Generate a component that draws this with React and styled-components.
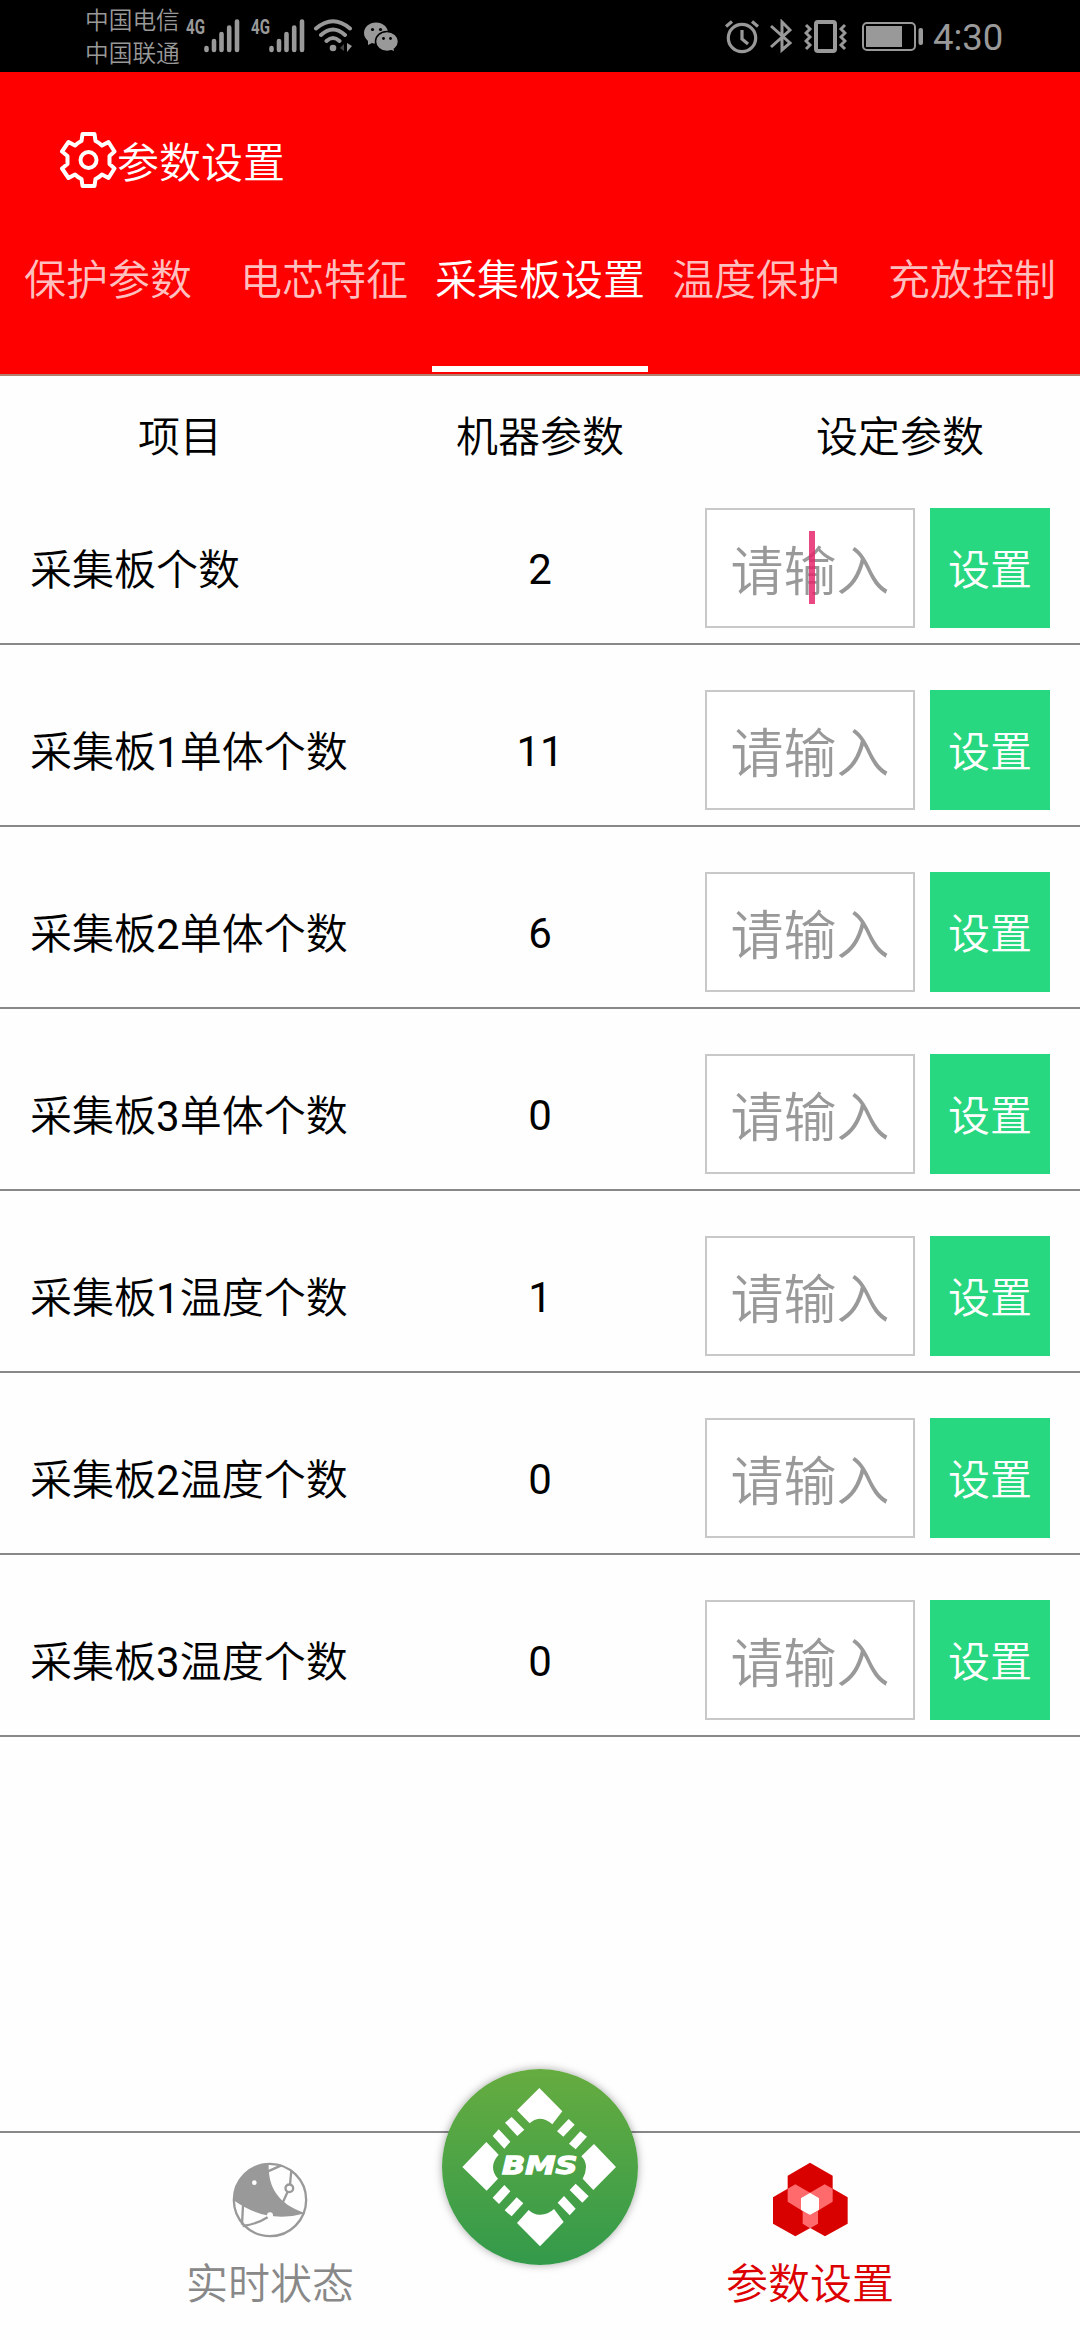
import React from "react";
import styled, { createGlobalStyle } from "styled-components";

const GlobalStyle = createGlobalStyle`
  * {
    box-sizing: border-box;
  }
  body {
    margin: 0;
    background: #fefefe;
    color: #000;
    font-family: Roboto, "Noto Sans CJK SC", sans-serif;
    font-size: 42px;
    font-weight: 350;
    line-height: 50px;
  }
  svg {
    display: block;
    flex: none;
  }
`;

const StyledPage = styled.div`
  display: flex;
  flex-direction: column;
  width: 1080px;
  height: 2340px;
`;

const StyledStatusBar = styled.div`
  display: flex;
  justify-content: space-between;
  height: 72px;
  padding: 0 78px 0 85px;
  background: #000;
  color: #999;
`;

const StyledStatusGroup = styled.div`
  display: flex;
  align-items: flex-start;
  padding-top: ${(props) => props.$top || 0}px;
`;

const StyledCarriers = styled.div`
  width: 101px;
  padding-top: 5px;
  font-size: 23.7px;
  line-height: 33px;
  white-space: nowrap;
`;

const StyledSignal = styled.div`
  display: flex;
  align-items: flex-start;
  width: 65px;
  padding-top: 19px;
`;

const StyledNetwork = styled.span`
  width: 18px;
  font-size: 21px;
  font-weight: 700;
  line-height: 16px;
  transform: scaleX(0.72);
  transform-origin: left;
`;

const StyledStatusIcon = styled.svg`
  margin-top: ${(props) => props.$top || 0}px;
  margin-left: ${(props) => props.$left || 0}px;
`;

const StyledClock = styled.span`
  width: 69px;
  margin-left: 9px;
  font-size: 36.5px;
  font-weight: 400;
  line-height: 38px;
  white-space: nowrap;
`;

const StyledHeader = styled.header`
  display: flex;
  flex-direction: column;
  height: 304px;
  background: #ff0000;
  border-bottom: 2px solid #b08070;
  color: #fff;
`;

const StyledTitle = styled.div`
  display: flex;
  align-items: center;
  height: 56px;
  margin: 60px 0 0 60px;
`;

const StyledTitleText = styled.h1`
  margin: 7px 0 0;
  font-size: 42px;
  font-weight: 350;
`;

const StyledTabs = styled.nav`
  display: flex;
  flex: 1;
`;

const StyledTab = styled.div`
  width: 216px;
  margin-bottom: 2px;
  padding-top: 68px;
  border-bottom: 6px solid ${(props) => (props.$active ? "#fff" : "transparent")};
  color: ${(props) => (props.$active ? "#fff" : "#ffbfbf")};
  text-align: center;
  white-space: nowrap;
`;

const StyledTableHead = styled.div`
  display: grid;
  grid-template-columns: repeat(3, 360px);
  height: 87px;
  padding-top: 37px;
  text-align: center;
`;

const StyledRow = styled.div`
  display: grid;
  grid-template-columns: 360px 345px 375px;
  height: 182px;
  padding: 45px 0 15px;
  border-bottom: 2px solid #888;
`;

const StyledLabel = styled.div`
  padding: 38px 0 0 30px;
  white-space: nowrap;
`;

const StyledDigit = styled.span`
  font-weight: 400;
`;

const StyledValue = styled.div`
  width: 360px;
  padding-top: 37px;
  font-weight: 400;
  text-align: center;
`;

const StyledActions = styled.div`
  display: flex;
  gap: 15px;
`;

const StyledInput = styled.div`
  position: relative;
  width: 210px;
  height: 120px;
  padding-top: 31px;
  border: 2px solid #c8c8c8;
  background: #fff;
  color: #999;
  font-size: 53px;
  line-height: 64px;
  text-align: center;
`;

const StyledCaret = styled.div`
  position: absolute;
  top: 21px;
  left: 102px;
  width: 6px;
  height: 73px;
  background: rgba(228, 35, 105, 0.83);
`;

const StyledButton = styled.div`
  width: 120px;
  height: 120px;
  padding-top: 38px;
  background: #28d880;
  color: #fff;
  text-align: center;
`;

const StyledFooter = styled.footer`
  display: grid;
  grid-template-columns: repeat(2, 540px);
  position: relative;
  height: 209px;
  margin-top: auto;
  border-top: 2px solid #888;
`;

const StyledFooterItem = styled.div`
  display: flex;
  flex-direction: column;
  align-items: center;
  padding-top: 29px;
  color: ${(props) => (props.$active ? "#dc0000" : "#888")};
`;

const StyledFooterText = styled.div`
  margin-top: 22px;
`;

const StyledLogo = styled.div`
  position: absolute;
  top: -64px;
  left: 442px;
  width: 196px;
  height: 196px;
  border-radius: 50%;
  background: linear-gradient(#66ac40, #339a4b);
  box-shadow: 0 0 8px rgba(0, 0, 0, 0.35);
`;

const tabs = ["保护参数", "电芯特征", "采集板设置", "温度保护", "充放控制"];

const rows = [
  { label: "采集板个数", value: 2 },
  { label: "采集板1单体个数", value: 11 },
  { label: "采集板2单体个数", value: 6 },
  { label: "采集板3单体个数", value: 0 },
  { label: "采集板1温度个数", value: 1 },
  { label: "采集板2温度个数", value: 0 },
  { label: "采集板3温度个数", value: 0 },
];

function Signal() {
  return (
    <StyledSignal>
      <StyledNetwork>4G</StyledNetwork>
      <svg width="36" height="34" stroke="#999" strokeWidth="4.6" strokeLinecap="round">
        <path d="M2.5 29v2M10 22v9M17.5 15v16M25.2 8.5v22.5M33 2.5v28.5" />
      </svg>
    </StyledSignal>
  );
}

function StatusBar() {
  return (
    <StyledStatusBar>
      <StyledStatusGroup>
        <StyledCarriers>
          <div>中国电信</div>
          <div>中国联通</div>
        </StyledCarriers>
        <Signal />
        <Signal />
        <StyledStatusIcon $top={19} $left={-3} width="42" height="34" fill="none" stroke="#999" strokeWidth="4" strokeLinecap="round">
          <path d="M3 9.5Q20 -5 37 9.5M8 16Q20 5 32 16M13.5 22Q20 16 26.5 22" />
          <circle cx="20" cy="29" r="3.3" fill="#999" stroke="none" />
          <path d="M34 24l5 3-5 6z" fill="#999" stroke="none" />
          <path d="M31 25v7l-4-3z" fill="#444" stroke="none" />
        </StyledStatusIcon>
        <StyledStatusIcon $top={21} $left={9} width="35" height="32" viewBox="0 0 35 32">
          <ellipse cx="12" cy="12" rx="12" ry="10.5" fill="#999" />
          <path d="M4 19l0 5 6-3z" fill="#999" />
          <ellipse cx="23" cy="20.5" rx="11.5" ry="10" fill="#999" stroke="#000" strokeWidth="1.5" />
          <path d="M25 28l5 2-1-5z" fill="#999" />
          <circle cx="8.5" cy="8.5" r="1.6" />
          <circle cx="16.5" cy="8.5" r="1.6" />
          <circle cx="19.5" cy="17.5" r="1.4" />
          <circle cx="26.5" cy="17.5" r="1.4" />
        </StyledStatusIcon>
      </StyledStatusGroup>
      <StyledStatusGroup $top={19}>
        <StyledStatusIcon width="34" height="36" fill="none" stroke="#999" strokeWidth="3.2">
          <circle cx="17" cy="19" r="13.7" />
          <path d="M17 11v9l6 5M1 7.5l6-5M33 7.5l-6-5" />
        </StyledStatusIcon>
        <StyledStatusIcon $left={11} width="22" height="36" fill="none" stroke="#999" strokeWidth="3">
          <path d="M1 7l19 17-8 7V3l8 8L1 28" />
        </StyledStatusIcon>
        <StyledStatusIcon $left={12} width="43" height="36" fill="none" stroke="#999" strokeWidth="3.5">
          <rect x="12" y="3" width="19" height="29" rx="2" strokeWidth="4" />
          <path d="M2 6l4 4-4 4 4 4-4 4 4 4-4 4M41 6l-4 4 4 4-4 4 4 4-4 4 4 4" strokeWidth="3" />
        </StyledStatusIcon>
        <StyledStatusIcon $left={15} width="62" height="36" fill="none" stroke="#999">
          <rect x="1" y="4" width="52" height="27" rx="4" strokeWidth="2" />
          <rect x="4" y="7" width="36" height="21" fill="#999" stroke="none" />
          <rect x="56.5" y="9" width="4.5" height="17" rx="2" fill="#999" stroke="none" />
        </StyledStatusIcon>
        <StyledClock>4:30</StyledClock>
      </StyledStatusGroup>
    </StyledStatusBar>
  );
}

function GearIcon() {
  return (
    <svg width="57" height="56" viewBox="0 0 57 56" fill="none" stroke="#fff" strokeWidth="4" strokeLinejoin="round">
      <path d="M22.5 2H34.5L35.5 9Q39 10.5 42 13.5L48.5 10L54.5 19.5L49.5 24V32L54.5 36.5L48.5 46L42 42.5Q39 45.5 35.5 47L34.5 54H22.5L21.5 47Q18 45.5 15 42.5L8.5 46L2 36.5L7.5 32V24L2 19.5L8.5 10L15 13.5Q18 10.5 21.5 9Z" />
      <circle cx="28.5" cy="28" r="8" />
    </svg>
  );
}

function GlobeIcon() {
  return (
    <svg width="76" height="76" viewBox="214 126 228 228" fill="none" stroke="#999" strokeWidth="7">
      <path d="M218 240A110 110 0 0 1 324 130C322 195 345 250 434 280Q375 297 318 286Q265 274 218 240Z" fill="#999" stroke="none" />
      <circle cx="328" cy="240" r="108.5" />
      <path d="M322 154L362 136M392 150L388 195M382 213L366 248M247 256L244 314M246 318Q290 312 322 291" />
      <circle cx="386" cy="205" r="11.5" fill="#fefefe" />
      <circle cx="328" cy="286" r="9" fill="#fefefe" stroke="none" />
      <circle cx="281" cy="188" r="7" fill="#fefefe" stroke="none" />
    </svg>
  );
}

function HexIcon() {
  return (
    <svg width="76" height="76" viewBox="214 126 228 228" fill="#d90000">
      <path d="M328 128l68 39v78l-68 40-67-40v-78z" />
      <path d="M284 193l68 39v79l-68 38-67-38v-79z" />
      <path d="M373 193l68 39v79l-68 38-67-38v-79z" />
      <g fill="#ff6a6c">
        <path d="M284 193l44 25-27 16v36l-40-25v-39z" />
        <path d="M372 193l-44 25 27 16v36l41-25v-39z" />
        <path d="M306 272l22 13 24-13v39l-24 14-22-14z" />
      </g>
      <path d="M328 218l27 16v36l-27 15-27-15v-36z" fill="#fff" />
    </svg>
  );
}

function Logo() {
  return (
    <StyledLogo>
      <svg width="196" height="196" viewBox="66 88 588 588" fill="#fff">
        <path d="M358 145L427 215L397 254Q380 237 358 237Q343 238 329 251L291 212Z" />
        <path d="M588 382L522 313L484 350Q498 364 498 382Q498 400 488 417L520 451Z" />
        <path d="M127 382L199 307L236 345Q219 364 219 382Q219 402 234 417L200 453Z" />
        <path d="M291 550L326 511Q342 526 361 525Q384 525 402 508L431 547L360 620Z" />
        <path d="M275 232l38 38-21 19-37-40zM236 269l35 37-18 21-35-38z" />
        <path d="M446 238l18 17-34 36-19-16zM481 275l20 16-34 38-20-17z" />
        <path d="M253 436l18 19-34 38-19-19zM290 473l20 18-35 39-21-18z" />
        <path d="M467 432l39 38-19 19-38-38zM432 469l35 38-18 20-36-38z" />
        <text
          x="246"
          y="402"
          fontFamily="DejaVu Sans, sans-serif"
          fontSize="74"
          fontWeight="700"
          fontStyle="italic"
          stroke="#fff"
          strokeWidth="4"
          textLength="226"
          lengthAdjust="spacingAndGlyphs"
        >
          BMS
        </text>
      </svg>
    </StyledLogo>
  );
}

function Row({ label, value, focused }) {
  return (
    <StyledRow>
      <StyledLabel>
        {label.split(/(\d)/).map((part, i) =>
          i % 2 ? <StyledDigit key={i}>{part}</StyledDigit> : part
        )}
      </StyledLabel>
      <StyledValue>{value}</StyledValue>
      <StyledActions>
        <StyledInput>
          请输入
          {focused && <StyledCaret />}
        </StyledInput>
        <StyledButton>设置</StyledButton>
      </StyledActions>
    </StyledRow>
  );
}

function App() {
  return (
    <StyledPage>
      <GlobalStyle />
      <StatusBar />
      <StyledHeader>
        <StyledTitle>
          <GearIcon />
          <StyledTitleText>参数设置</StyledTitleText>
        </StyledTitle>
        <StyledTabs>
          {tabs.map((tab, i) => (
            <StyledTab key={tab} $active={i === 2}>
              {tab}
            </StyledTab>
          ))}
        </StyledTabs>
      </StyledHeader>
      <StyledTableHead>
        <div>项目</div>
        <div>机器参数</div>
        <div>设定参数</div>
      </StyledTableHead>
      {rows.map((row, i) => (
        <Row key={row.label} label={row.label} value={row.value} focused={i === 0} />
      ))}
      <StyledFooter>
        <StyledFooterItem>
          <GlobeIcon />
          <StyledFooterText>实时状态</StyledFooterText>
        </StyledFooterItem>
        <StyledFooterItem $active>
          <HexIcon />
          <StyledFooterText>参数设置</StyledFooterText>
        </StyledFooterItem>
        <Logo />
      </StyledFooter>
    </StyledPage>
  );
}

export default App;
